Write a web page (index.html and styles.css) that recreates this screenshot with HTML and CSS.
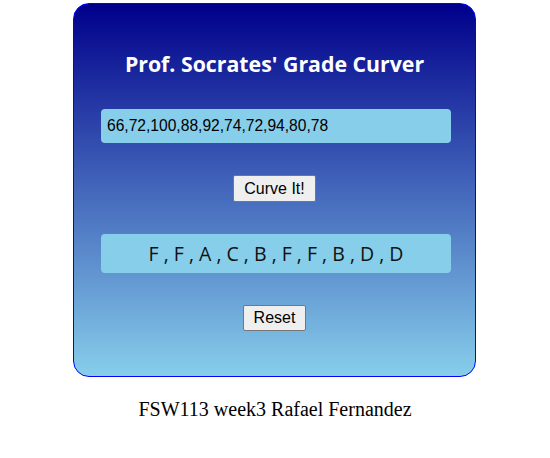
FILE: index.html
```html
<!DOCTYPE html>
<html>
<head>
<meta charset="utf-8">
<link rel="stylesheet" href="styles.css">
</head>
<body>
<div class="card">
  <h1 class="title">Prof. Socrates' Grade Curver</h1>
  <input class="scores" type="text" value="66,72,100,88,92,74,72,94,80,78">
  <div class="center"><button class="btn curve">Curve It!</button></div>
  <div class="output">F , F , A , C , B , F , F , B , D , D</div>
  <div class="center"><button class="btn reset">Reset</button></div>
</div>
<p class="footer">FSW113 week3 Rafael Fernandez</p>
</body>
</html>
```

FILE: styles.css
```css
html, body {
  margin: 0;
  padding: 0;
  background: #fff;
}
body {
  font-family: "Liberation Serif", serif;
}
.card {
  box-sizing: border-box;
  width: 403px;
  margin: 3px 0 0 73px;
  border: 1px solid #0000ff;
  border-radius: 16px;
  background: linear-gradient(to bottom, #00008b, #87ceeb);
  padding: 0 26px 45px 26px;
  display: flex;
  flex-direction: column;
}
.title {
  margin: 45px 0 0;
  line-height: 30px;
  height: 30px;
  font-family: "Open Sans", "Noto Sans", sans-serif;
  font-size: 21.3px;
  font-weight: 700;
  color: #fff;
  text-align: center;
  white-space: nowrap;
}
.scores {
  box-sizing: border-box;
  margin: 30px 0 0 1px;
  height: 34px;
  width: 350px;
  border: none;
  border-radius: 4px;
  background: #87ceeb;
  padding: 0 6px;
  font-family: "Liberation Sans", Arial, sans-serif;
  font-size: 15.6px;
  color: #000;
  outline: none;
}
.center {
  display: flex;
  justify-content: center;
  margin-top: 32px;
}
.btn {
  box-sizing: border-box;
  font-family: "Liberation Sans", Arial, sans-serif;
  font-size: 16px;
  color: #000;
  background: #efefef;
  border: 1px solid #767676;
  border-radius: 2px;
  padding: 0 8px;
  margin: 0;
}
.curve { height: 27px; width: 83px; }
.reset { height: 26px; width: 63px; }
.output {
  box-sizing: border-box;
  margin: 32px 0 0 1px;
  height: 39px;
  width: 350px;
  border-radius: 4px;
  background: #87ceeb;
  display: flex;
  align-items: center;
  justify-content: center;
  font-family: "Open Sans", "Noto Sans", sans-serif;
  font-size: 19.5px;
  color: #111;
}
.footer {
  margin: 21px 0 0;
  line-height: 22px;
  text-align: center;
  font-size: 20px;
  color: #000;
}
```
